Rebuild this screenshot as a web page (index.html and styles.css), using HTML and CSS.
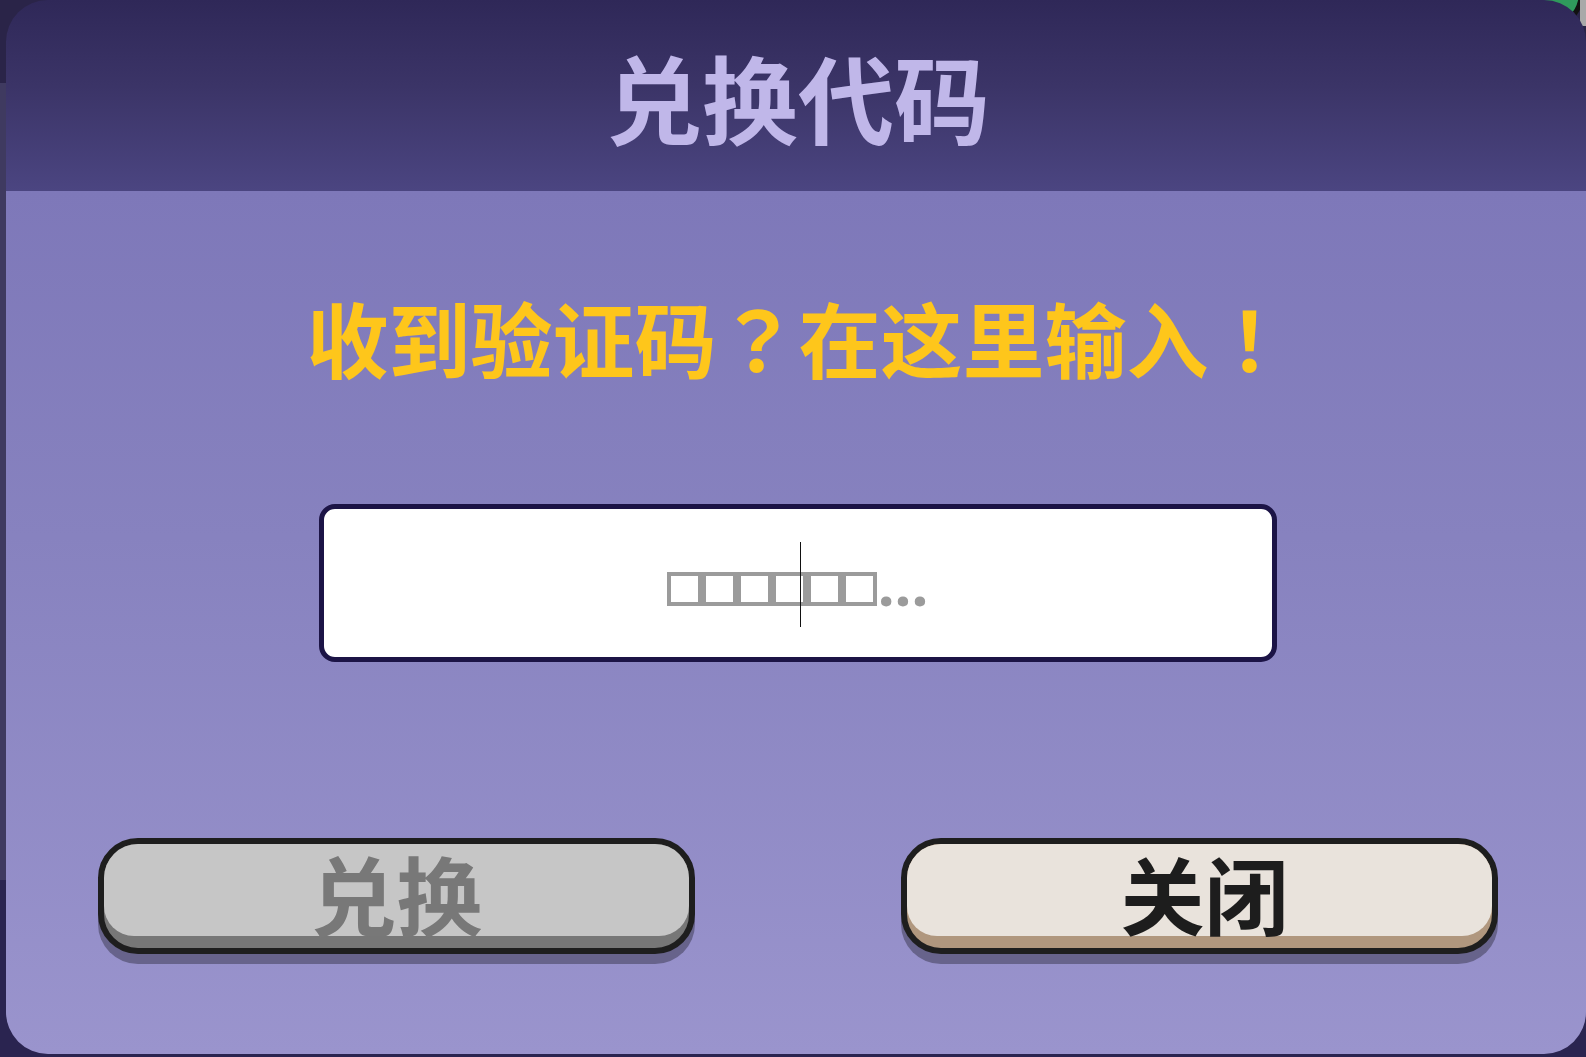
FILE: index.html
```html
<!DOCTYPE html>
<html lang="zh-CN">
<head>
<meta charset="utf-8">
<title>兑换代码</title>
<link rel="stylesheet" href="styles.css">
</head>
<body>
<div class="behind">
  <div class="behind-orb"></div>
  <div class="behind-bar"></div>
</div>
<div class="panel">
  <header class="panel-head">
    <h1 class="title">兑换代码</h1>
  </header>
  <main class="panel-body">
    <p class="prompt">收到验证码<span class="punct" lang="ja">？</span>在这里输入<span class="punct" lang="ja">！</span></p>
    <div class="code-input">
      <div class="placeholder">
        <span class="tofu"></span><span class="tofu"></span><span class="tofu"></span><span class="tofu"></span><span class="tofu"></span><span class="tofu"></span><span class="dots">...</span>
      </div>
      <span class="caret"></span>
    </div>
    <div class="actions">
      <button class="btn btn-gray"><span class="face"></span><span class="label">兑换</span></button>
      <button class="btn btn-cream"><span class="face"></span><span class="label">关闭</span></button>
    </div>
  </main>
</div>
</body>
</html>
```
FILE: styles.css
```css
html, body {
  margin: 0;
  padding: 0;
}
body {
  width: 1586px;
  height: 1057px;
  overflow: hidden;
  position: relative;
  background: linear-gradient(to bottom, #2a2448 0, #2a2448 83px, #3f3a60 83px, #3f3a60 880px, #2a2450 880px);
  font-family: "Noto Sans CJK SC", "Noto Sans", sans-serif;
}
.behind {
  position: absolute;
  top: 0;
  right: 0;
  width: 80px;
  height: 40px;
  z-index: 0;
}
.behind-orb {
  position: absolute;
  left: -2px;
  top: -48px;
  width: 70px;
  height: 70px;
  border-radius: 50%;
  background: #2f9a5c;
  border: 5px solid #111;
}
.behind-bar {
  position: absolute;
  right: 0;
  top: 0;
  width: 6px;
  height: 26px;
  background: #a9a9a9;
}
.panel {
  position: relative;
  z-index: 1;
  margin-left: 6px;
  width: 1580px;
  height: 1054px;
  border-radius: 42px;
  overflow: hidden;
  display: flex;
  flex-direction: column;
}
.panel-head {
  height: 191px;
  flex: none;
  display: flex;
  align-items: center;
  justify-content: center;
  background: linear-gradient(to bottom, #2f2858 0%, #3b3467 45%, #4b4581 100%);
}
.title {
  margin: 0 0 0 4px;
  font-size: 96px;
  line-height: 96px;
  font-weight: 700;
  color: #c0b7e9;
}
.panel-body {
  flex: 1;
  display: flex;
  flex-direction: column;
  align-items: center;
  background: linear-gradient(to bottom, #7e78b9 0%, #8782bf 40%, #9a94cd 100%);
}
.prompt {
  margin: 105px 0 0 5px;
  font-size: 82px;
  line-height: 82px;
  font-weight: 700;
  color: #fec61b;
  white-space: nowrap;
}
.punct {
  font-family: "Noto Sans CJK JP", "Noto Sans CJK SC", sans-serif;
}
.code-input {
  position: relative;
  box-sizing: border-box;
  margin-top: 126px;
  margin-left: 3px;
  width: 958px;
  height: 158px;
  background: #fff;
  border: 5px solid #1c1446;
  border-radius: 16px;
  display: flex;
  align-items: center;
  justify-content: center;
}
.placeholder {
  display: flex;
  align-items: baseline;
  margin-top: 6px;
}
.tofu {
  display: inline-block;
  box-sizing: border-box;
  width: 35px;
  height: 34px;
  border: 4px solid #9b9b9b;
}
.dots {
  font-family: "Noto Sans", sans-serif;
  font-weight: 700;
  font-size: 60px;
  line-height: 34px;
  color: #9b9b9b;
  margin-left: 1px;
}
.caret {
  position: absolute;
  left: 476px;
  top: 33px;
  width: 1.5px;
  height: 85px;
  background: #111;
}
.actions {
  margin-top: 176px;
  width: 100%;
  box-sizing: border-box;
  padding: 0 88px 0 92px;
  display: flex;
  justify-content: space-between;
}
.btn {
  box-sizing: border-box;
  width: 597px;
  height: 116px;
  padding: 0;
  border: 6px solid #1e1e1e;
  border-radius: 40px;
  display: grid;
  grid-template-rows: 104px;
  box-shadow: 0 10px 0 #67638b;
  font-family: "Noto Sans CJK SC", "Noto Sans", sans-serif;
  cursor: pointer;
}
.face, .label {
  grid-area: 1 / 1;
}
.face {
  align-self: start;
  height: 92px;
  border-radius: 34px 34px 30px 30px;
}
.label {
  align-self: center;
  justify-self: center;
  font-size: 86px;
  line-height: 96px;
  font-weight: 700;
  margin-bottom: 6px;
}
.btn-gray {
  background: #777777;
}
.btn-gray .face {
  background: #c6c6c6;
}
.btn-gray .label {
  color: #787878;
}
.btn-cream {
  background: #b0977e;
}
.btn-cream .face {
  background: #e9e3dc;
}
.btn-cream .label {
  color: #1d1d1d;
  font-size: 84px;
  margin-left: 10px;
}
```
